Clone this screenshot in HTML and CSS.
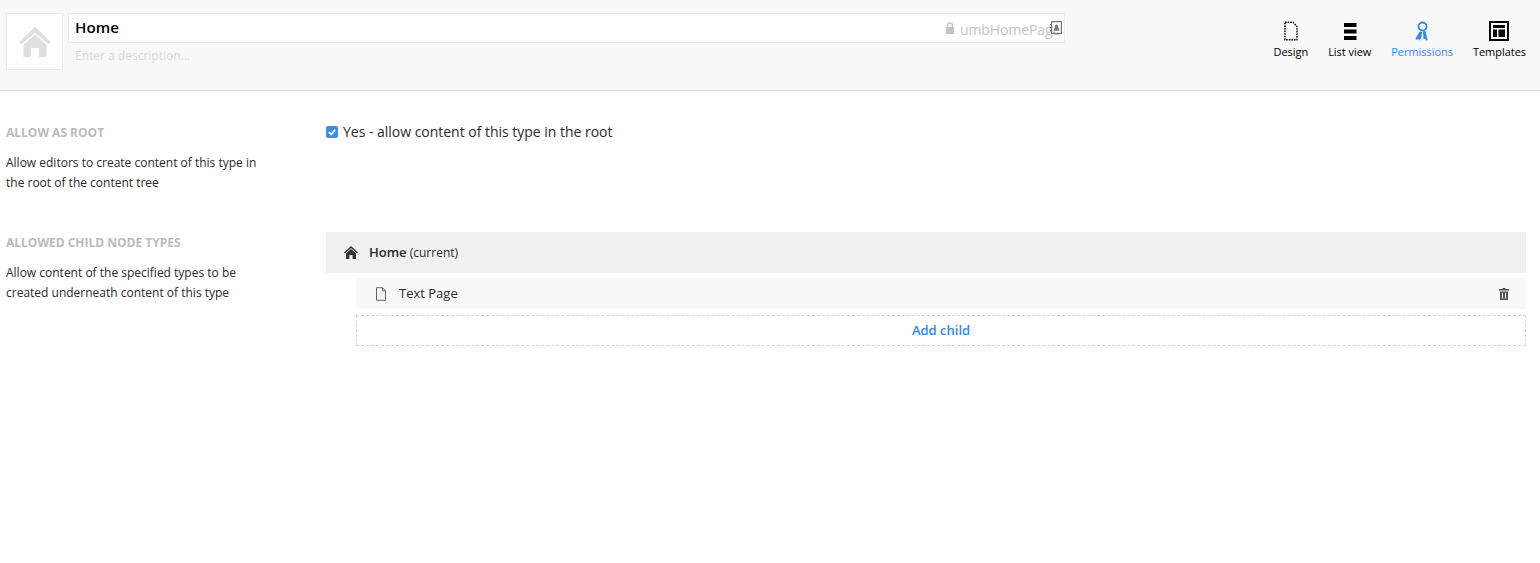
FILE: index.html
```html
<!DOCTYPE html>
<html lang="en">
<head>
<meta charset="utf-8">
<title>Home</title>
<link rel="stylesheet" href="styles.css">
</head>
<body>
<header class="header">
  <div class="icon-box">
    <svg viewBox="0 0 32 30" width="32" height="30"><path fill="#dfdfdf" d="M16 0 L32 15 L29.5 17.6 L16 5.8 L2.5 17.6 L0 15 Z M4.5 17.8 L16 7.4 L27.5 17.8 V30 H20 V21 H12 V30 H4.5 Z"/></svg>
  </div>
  <div class="titles">
    <div class="name-field">
      <span class="name">Home</span>
      <div class="alias">
        <svg class="lock" viewBox="0 0 10 12" width="10" height="12"><path fill="#c4c4c4" d="M2 5V3.2a3 3 0 0 1 6 0V5h1.2v7H.8V5zm1.4 0h3.2V3.2a1.6 1.6 0 0 0-3.2 0z"/></svg>
        <span class="alias-text">umbHomePage</span>
        <svg class="contact" viewBox="0 0 12 13" width="12" height="13"><path fill="none" stroke="#777" stroke-width="1.2" d="M1.6.6h9.8v11.8H1.6z"/><path fill="#777" d="M4 9.5h5V8L7.8 7a1.8 2 0 1 0-2.6 0L4 8zM0 3h1.2v1.2H0zM0 6h1.2v1.2H0zM0 9h1.2v1.2H0z"/></svg>
      </div>
    </div>
    <div class="description">Enter a description...</div>
  </div>
  <nav class="tabs">
    <div class="tab">
      <svg viewBox="0 0 16 20" width="16" height="20"><path fill="none" stroke="#000" stroke-width="1.4" stroke-dasharray="1.6 1" d="M2 1.2h8l4 4.4v13.2H2z"/></svg>
      <span>Design</span>
    </div>
    <div class="tab">
      <svg viewBox="0 0 16 20" width="16" height="20"><path fill="#000" d="M2 2h12.5v4H2zM2 8.5h12.5v4H2zM2 15h12.5v4H2z"/></svg>
      <span>List view</span>
    </div>
    <div class="tab tab-active">
      <svg viewBox="0 0 16 20" width="16" height="20"><circle cx="8.5" cy="5.5" r="4" fill="none" stroke="#2e8aea" stroke-width="1.8"/><path fill="#2e8aea" d="M5.8 10.5 8 11 7.5 16 6 19.5 4.5 17.5 3 19 1.5 17.5zM9 10.5l2.5-.5 2 9-1.5.5-1-2-1.5 1z"/></svg>
      <span>Permissions</span>
    </div>
    <div class="tab">
      <svg viewBox="0 0 20 20" width="20" height="20"><path fill="#000" fill-rule="evenodd" d="M0 0h20v20H0zM2 2v16h16V2z"/><path fill="#000" d="M4 4h12v3H4zM4 8.5h4V16H4zM9.5 8.5H16V16H9.5z"/></svg>
      <span>Templates</span>
    </div>
  </nav>
</header>
<main class="content">
  <section class="row row-root">
    <div class="info">
      <h2 class="label">Allow as root</h2>
      <p class="help">Allow editors to create content of this type in the root of the content tree</p>
    </div>
    <div class="editor editor-root">
      <label class="check">
        <span class="box"><svg viewBox="0 0 12 12" width="12" height="12"><path fill="none" stroke="#fff" stroke-width="1.8" d="M3 6.2 5.2 8.5 9.2 3.6"/></svg></span>
        <span>Yes - allow content of this type in the root</span>
      </label>
    </div>
  </section>
  <section class="row">
    <div class="info">
      <h2 class="label">Allowed child node types</h2>
      <p class="help">Allow content of the specified types to be created underneath content of this type</p>
    </div>
    <div class="editor editor-tree">
      <div class="parent">
        <svg viewBox="0 0 14 13" width="14" height="13"><path fill="#333" d="M7 0 14 6.4 13 7.5 7 2 1 7.5 0 6.4zM2 7.6 7 3l5 4.6V13H8.6V9H5.4v4H2z"/></svg>
        <span class="parent-text"><b>Home</b> (current)</span>
      </div>
      <div class="child">
        <svg viewBox="0 0 12 14" width="12" height="14"><path fill="none" stroke="#666" stroke-width="1" d="M1.5.7h6l3 3.2v9.4h-9z"/><path fill="none" stroke="#666" stroke-width="1" d="M7.5.7v3.2h3"/></svg>
        <span class="child-name">Text Page</span>
        <svg class="trash" viewBox="0 0 10 12" width="10" height="12"><path fill="#555" fill-rule="evenodd" d="M3.5 0h3v1H10v1.6H0V1h3.5zM1 3.4h8V12H1zM3 5v5.5h1V5zM6 5v5.5h1V5z"/></svg>
      </div>
      <div class="add">Add child</div>
    </div>
  </section>
</main>
</body>
</html>
```
FILE: styles.css
```css
* { box-sizing: border-box; }
html, body { margin: 0; padding: 0; }
body {
  background: #fff;
  font-family: "Open Sans", sans-serif;
  color: #2a2a2a;
  height: 563px;
  overflow: hidden;
}
.header {
  display: flex;
  align-items: flex-start;
  height: 91px;
  padding: 13px 14px 0 6px;
  background: #f8f8f8;
  border-bottom: 1px solid #d9d9d9;
}
.icon-box {
  width: 57px;
  height: 57px;
  display: flex;
  align-items: center;
  justify-content: center;
  background: #fff;
  border: 1px solid #ececec;
  flex: none;
}
.titles { width: 997px; margin-left: 5px; flex: none; }
.name-field {
  position: relative;
  height: 30px;
  background: #fff;
  border: 1px solid #ececec;
  padding-left: 6px;
  line-height: 27px;
}
.name { font-size: 15.2px; font-weight: 550; color: #000; }
.alias {
  position: absolute;
  top: 0;
  right: 2px;
  height: 28px;
  display: flex;
  align-items: center;
}
.lock { margin-right: 5px; }
.alias-text { font-size: 14px; letter-spacing: -0.1px; color: #c4c4c4; width: 95px; white-space: nowrap; margin-top: 2px; }
.contact { margin-left: -5px; margin-top: -1px; }
.description {
  font-size: 12px;
  color: #d8d8d8;
  padding: 4px 0 0 7px;
  line-height: 18px;
}
.tabs { display: flex; gap: 20px; margin-left: auto; padding-top: 8px; }
.tab {
  display: flex;
  flex-direction: column;
  align-items: center;
  font-size: 11px;
  letter-spacing: -0.04px;
  line-height: 15px;
  color: #000;
  gap: 3px;
}
.tab svg { display: block; }
.tab-active { color: #2e8aea; }
.content { padding: 0 14px 0 6px; }
.row { display: flex; }
.row-root { height: 144px; padding-top: 34px; }
.info { width: 320px; flex: none; }
.label {
  margin: 0;
  font-size: 12px;
  line-height: 16px;
  font-weight: 700;
  text-transform: uppercase;
  color: #bbb;
}
.help {
  margin: 12px 0 0;
  width: 260px;
  font-size: 12px;
  line-height: 20px;
  color: #2a2a2a;
}
.editor { flex: 1; }
.editor-root { margin-top: -1px; }
.check {
  display: flex;
  align-items: center;
  gap: 5px;
  font-size: 14px;
  letter-spacing: -0.02px;
  line-height: 16px;
  color: #2a2a2a;
}
.box {
  width: 12px;
  height: 12px;
  border-radius: 2px;
  background: #3b8dea;
  display: block;
  flex: none;
}
.box svg { display: block; }
.editor-tree { margin-top: -3px; }
.parent {
  height: 41px;
  background: #f0f0f0;
  display: flex;
  align-items: center;
  gap: 11px;
  padding-left: 18px;
  font-size: 12px;
  color: #2a2a2a;
}
.parent-text { margin-top: -2px; }
.parent b { font-size: 13px; font-weight: 600; }
.child {
  margin: 5px 0 0 30px;
  height: 31px;
  background: #f8f8f8;
  display: flex;
  align-items: center;
  padding: 0 17px 0 19px;
  font-size: 13px;
}
.child-name { margin: -2px 0 0 12px; }
.trash { margin-left: auto; }
.add {
  margin: 6px 0 0 30px;
  height: 31px;
  padding-bottom: 2px;
  border: 1px dashed #d4d4d4;
  display: flex;
  align-items: center;
  justify-content: center;
  font-size: 13px;
  font-weight: 600;
  color: #2e8aea;
}
```
